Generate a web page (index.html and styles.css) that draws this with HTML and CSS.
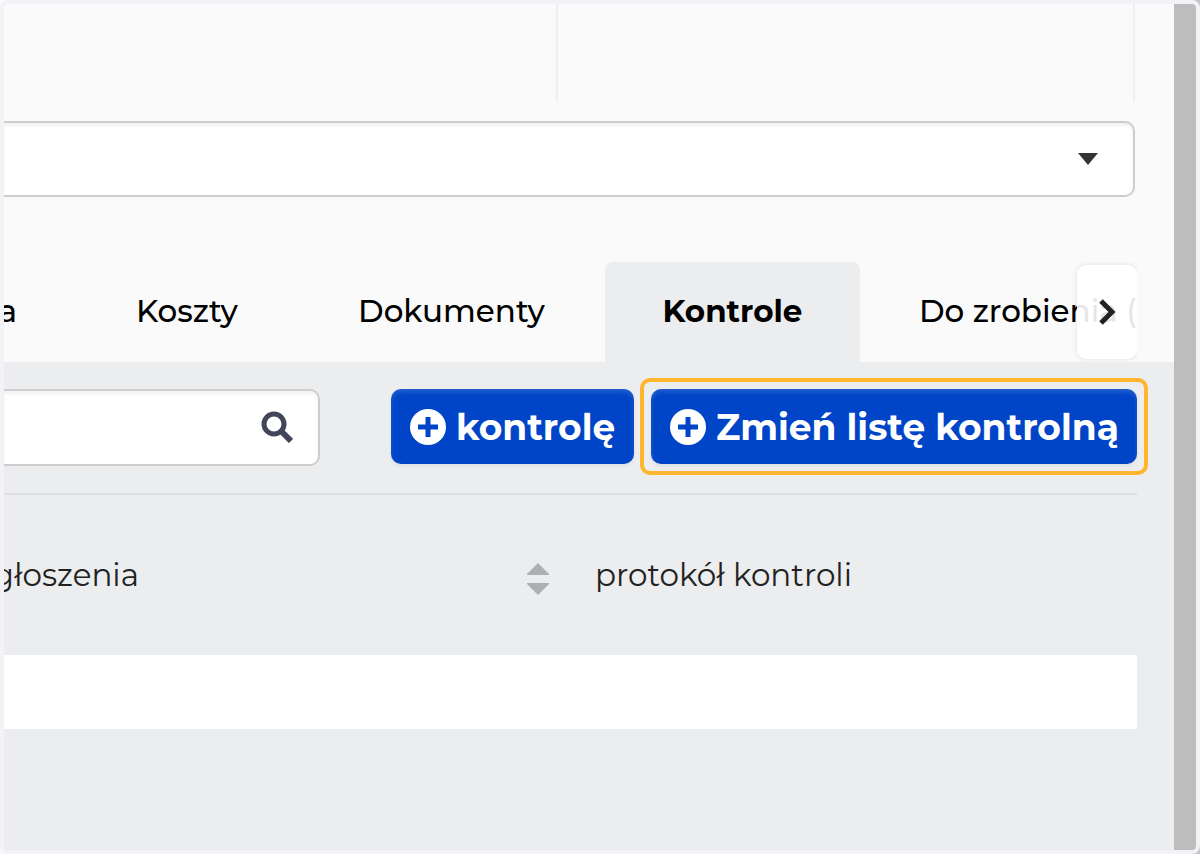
FILE: index.html
```html
<!DOCTYPE html>
<html lang="pl">
  <head>
    <meta charset="UTF-8" />
    <meta name="viewport" content="width=device-width, initial-scale=1.0" />
    <title>Kontrole</title>
    <link rel="stylesheet" href="styles.css" />
  </head>
  <body>
    <div class="frame">
      <main class="content">
        <section class="details">
          <div class="details-columns">
            <div class="details-cell"></div>
            <div class="details-cell"></div>
          </div>
          <div class="select-box">
            <select class="select" aria-label="Wybierz">
              <option></option>
            </select>
            <svg class="select-caret" viewBox="0 0 20 12" aria-hidden="true">
              <path d="M0 0h20L10 12z" />
            </svg>
          </div>
        </section>

        <nav class="tabs">
          <a class="tab tab-cut" href="#">a</a>
          <a class="tab tab-costs" href="#">Koszty</a>
          <a class="tab tab-documents" href="#">Dokumenty</a>
          <a class="tab tab-checks active" href="#">Kontrole</a>
          <a class="tab tab-todo" href="#">Do zrobienia (</a>
          <button class="tabs-next" type="button" aria-label="Dalej">
            <svg viewBox="0 0 18 28" aria-hidden="true">
              <path d="M3 3l11 11L3 25" />
            </svg>
          </button>
        </nav>

        <section class="panel">
          <div class="toolbar">
            <div class="search">
              <input class="search-input" type="text" aria-label="Szukaj" />
              <svg class="search-icon" viewBox="0 0 32 32" aria-hidden="true">
                <circle cx="13" cy="13" r="10" />
                <path class="search-handle" d="M20 20l10 10" />
              </svg>
            </div>
            <div class="actions">
              <button class="btn btn-check" type="button">
                <svg class="btn-icon" viewBox="0 0 36 36" aria-hidden="true">
                  <circle cx="18" cy="18" r="18" />
                  <path d="M18 8v20M8 18h20" />
                </svg>
                kontrolę
              </button>
              <button class="btn btn-list highlighted" type="button">
                <svg class="btn-icon" viewBox="0 0 36 36" aria-hidden="true">
                  <circle cx="18" cy="18" r="18" />
                  <path d="M18 8v20M8 18h20" />
                </svg>
                Zmień listę kontrolną
              </button>
            </div>
          </div>

          <table class="list">
            <thead>
              <tr>
                <th class="col-report">
                  <div class="heading">
                    <span class="heading-cut">głoszenia</span>
                    <svg class="sort" viewBox="0 0 22 32" aria-hidden="true">
                      <path d="M11 0l11 11v1H0v-1zM0 20h22v1L11 32 0 21z" />
                    </svg>
                  </div>
                </th>
                <th>protokół kontroli</th>
              </tr>
            </thead>
            <tbody>
              <tr>
                <td></td>
                <td></td>
              </tr>
            </tbody>
          </table>
        </section>
      </main>
      <div class="scrollbar"></div>
    </div>
  </body>
</html>
```

FILE: styles.css
```css
* {
  box-sizing: border-box;
}

html {
  background: linear-gradient(to right, #fafafa 50%, #c4c4c6 50%);
}

body {
  margin: 0;
  font-family: Montserrat, Inter, sans-serif;
  font-size: 31px;
  line-height: 40px;
  color: #222;
}

.frame {
  display: flex;
  min-height: 100vh;
  border: 4px solid #f2f2f7;
  border-radius: 8px;
  background: #fafafa;
  overflow: hidden;
}

.content {
  display: flex;
  flex-direction: column;
  flex: 1;
  min-width: 0;
}

.scrollbar {
  flex: none;
  width: 22px;
  background: #bdbdbd;
}

/* Top details and select */
.details {
  padding-right: 39px;
}

.details-columns {
  display: grid;
  grid-template-columns: 49% 51%;
  height: 98px;
}

.details-cell {
  border-right: 2px solid #efeff0;
}

.select-box {
  position: relative;
  margin-top: 19px;
}

.select {
  display: block;
  width: 100%;
  height: 76px;
  padding: 0 60px 0 20px;
  border: 2px solid #cdcdcd;
  border-left: 0;
  border-radius: 0 10px 10px 0;
  background: #fff;
  box-shadow: inset 0 3px 3px rgba(0, 0, 0, 0.05);
  font: inherit;
  appearance: none;
}

.select-caret {
  position: absolute;
  top: 32px;
  right: 37px;
  width: 20px;
  height: 12px;
  fill: #333;
  pointer-events: none;
}

/* Tabs */
.tabs {
  position: relative;
  display: flex;
  margin: 65px 37px 0 0;
  overflow: hidden;
}

.tab {
  display: flex;
  flex: none;
  align-items: center;
  justify-content: center;
  height: 100px;
  padding-bottom: 2px;
  color: #000;
  font-weight: 500;
  text-decoration: none;
  white-space: nowrap;
}

.tab.active {
  border-radius: 8px 8px 0 0;
  background: #ecedef;
  font-weight: 700;
}

.tab-cut {
  justify-content: flex-end;
  width: 72px;
  padding-right: 59px;
}

.tab-costs {
  width: 222px;
}

.tab-documents {
  width: 307px;
}

.tab-checks {
  width: 255px;
}

.tab-todo {
  padding-left: 59px;
}

.tabs-next {
  position: absolute;
  top: 3px;
  right: 0;
  display: flex;
  align-items: center;
  justify-content: center;
  width: 60px;
  height: 94px;
  padding: 0;
  border: 0;
  border-radius: 10px;
  background: rgba(255, 255, 255, 0.9);
  box-shadow: 0 0 6px rgba(0, 0, 0, 0.1);
}

.tabs-next svg {
  width: 18px;
  height: 28px;
  fill: none;
  stroke: #222;
  stroke-width: 5;
}

/* Panel */
.panel {
  flex: 1;
  padding-right: 37px;
  background: #ecedef;
}

.toolbar {
  display: flex;
  align-items: flex-start;
  justify-content: space-between;
  padding: 27px 0;
  border-bottom: 2px solid #dddee0;
}

.search {
  position: relative;
  width: 316px;
}

.search-input {
  display: block;
  width: 100%;
  height: 77px;
  padding: 0 70px 0 20px;
  border: 2px solid #cdcdcd;
  border-left: 0;
  border-radius: 0 10px 10px 0;
  background: #fff;
  box-shadow: inset 0 3px 3px rgba(0, 0, 0, 0.05);
  font: inherit;
}

.search-icon {
  position: absolute;
  top: 22px;
  right: 27px;
  width: 32px;
  height: 32px;
  fill: none;
  stroke: #42465a;
  stroke-width: 5;
}

.search-handle {
  stroke-width: 6;
}

.actions {
  display: flex;
  gap: 17px;
}

.btn {
  position: relative;
  display: flex;
  align-items: center;
  gap: 10px;
  height: 75px;
  padding: 1px 0 0 19px;
  border: 0;
  border-radius: 10px;
  background: #0045c7;
  box-shadow: inset 0 3px 4px rgba(255, 255, 255, 0.14),
    0 2px 4px rgba(0, 0, 0, 0.06);
  color: #fff;
  font: inherit;
  font-size: 36px;
  font-weight: 700;
  white-space: nowrap;
}

.btn-check {
  width: 243px;
}

.btn-list {
  width: 486px;
}

.btn-icon {
  flex: none;
  width: 36px;
  height: 36px;
  fill: #fff;
  stroke: #0045c7;
  stroke-width: 5;
}

.btn-icon circle {
  stroke: none;
}

.highlighted::after {
  content: "";
  position: absolute;
  inset: -11px;
  border: 4px solid #ffb52e;
  border-radius: 10px;
}

/* Table */
.list {
  width: 100%;
  border-collapse: collapse;
  table-layout: fixed;
}

.list th {
  height: 160px;
  padding: 0;
  font-weight: 400;
  text-align: left;
}

.col-report {
  width: 591px;
}

.heading {
  display: flex;
  align-items: center;
  justify-content: space-between;
  padding-right: 46px;
}

.heading-cut {
  display: flex;
  justify-content: flex-end;
  width: 135px;
  overflow: hidden;
}

.sort {
  width: 22px;
  height: 32px;
  margin-top: 8px;
  fill: #aeafb1;
}

.list td {
  height: 74px;
  padding: 0;
  background: #fff;
}
```
